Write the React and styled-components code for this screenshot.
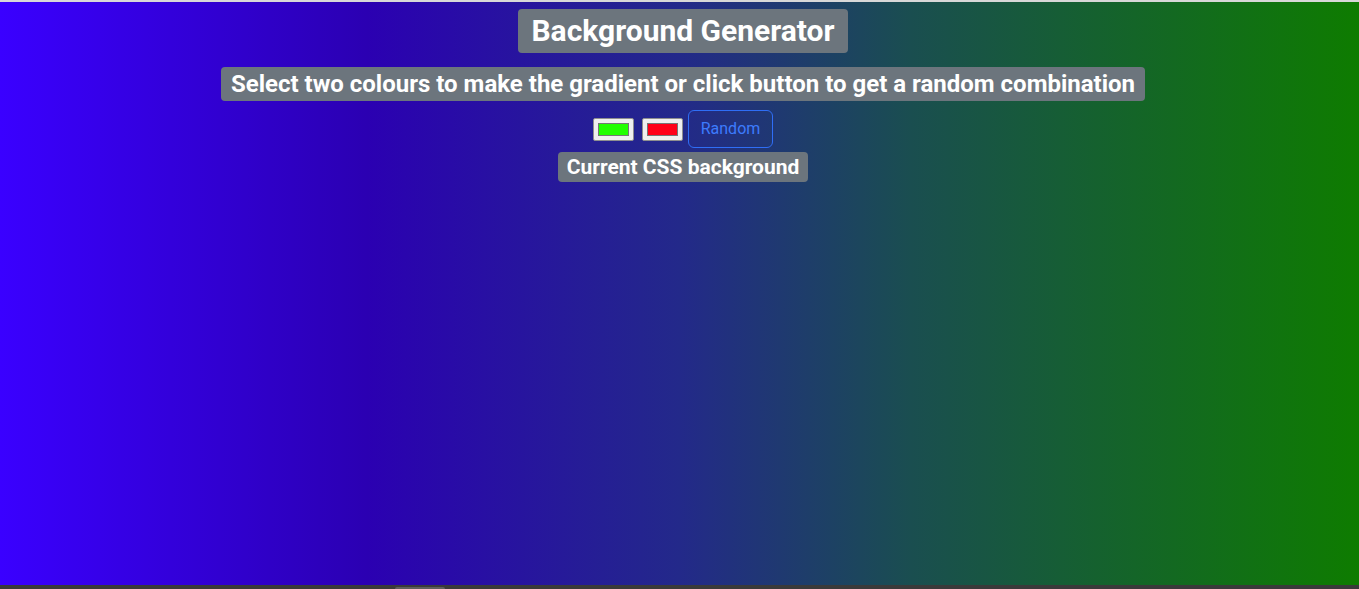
import React, { useState } from 'react'
import styled, { createGlobalStyle } from 'styled-components'

const GlobalStyle = createGlobalStyle`
  html, body {
    margin: 0;
    padding: 0;
    height: 100%;
    overflow: hidden;
  }
  body {
    font-family: Roboto, "Liberation Sans", Arial, sans-serif;
    background: #3a3a3a;
  }
`

//ウィンドウ全体
const Screen = styled.div`
  display: flex;
  flex-direction: column;
  height: 589px;
`

const TopEdge = styled.div`
  height: 2px;
  background: #d8d8d8;
`

//グラデーション背景
const Canvas = styled.main`
  flex: 1;
  display: flex;
  flex-direction: column;
  align-items: center;
  padding: 7px 0 0 7px;
  background: linear-gradient(
    to right,
    #3a00ff 0%,
    #2b00b2 27%,
    #23298a 50%,
    #1a4e50 67%,
    #0e7c00 100%
  );
`

const Badge = styled.h1`
  margin: 0;
  padding: ${({ pad }) => pad};
  font-size: ${({ size }) => size}px;
  line-height: ${({ lh }) => lh}px;
  font-weight: 700;
  color: #fff;
  background: #6c757d;
  border-radius: 4px;
  margin-bottom: ${({ gap }) => gap}px;
  white-space: nowrap;
`

const Controls = styled.div`
  display: flex;
  align-items: center;
  margin-bottom: 4px;
`

const ColorInput = styled.input`
  -webkit-appearance: none;
  appearance: none;
  width: 41px;
  height: 23px;
  padding: 0;
  margin: 0 ${({ after }) => after}px 0 0;
  background: #efefef;
  border: 1px solid #8f8f8f;
  border-radius: 2px;
  cursor: pointer;

  &::-webkit-color-swatch-wrapper {
    padding: 4px 4px;
  }
  &::-webkit-color-swatch {
    border: 1px solid #767676;
    border-radius: 0;
  }
`

const RandomButton = styled.button`
  font-family: inherit;
  font-size: 16px;
  line-height: 24px;
  padding: 6px 12px;
  color: #3d7bfd;
  background: transparent;
  border: 1px solid #2f6ef6;
  border-radius: 6px;
  cursor: pointer;
`

const Scrollbar = styled.div`
  height: 4px;
  background: #3a3a3a;
  display: flex;
  align-items: flex-end;
`

const Thumb = styled.div`
  margin-left: 395px;
  width: 50px;
  height: 2px;
  background: #5e5e5e;
  border-radius: 2px 2px 0 0;
`

function App() {
  const [left, setLeft] = useState('#22ff00')
  const [right, setRight] = useState('#ff0018')

  return (
    <>
      <GlobalStyle />
      <Screen>
        <TopEdge />
        <Canvas>
          <Badge as="h1" size={30} lh={36} pad="4px 13px" gap={14}>Background Generator</Badge>
          <Badge as="h3" size={24} lh={28} pad="3px 10px" gap={9}>
            Select two colours to make the gradient or click button to get a random combination
          </Badge>
          <Controls>
            <ColorInput type="color" after={8} value={left} onChange={e => setLeft(e.target.value)} />
            <ColorInput type="color" after={5} value={right} onChange={e => setRight(e.target.value)} />
            <RandomButton>Random</RandomButton>
          </Controls>
          <Badge as="h4" size={21} lh={24} pad="3px 9px" gap={0}>Current CSS background</Badge>
        </Canvas>
        <Scrollbar>
          <Thumb />
        </Scrollbar>
      </Screen>
    </>
  )
}

export default App
